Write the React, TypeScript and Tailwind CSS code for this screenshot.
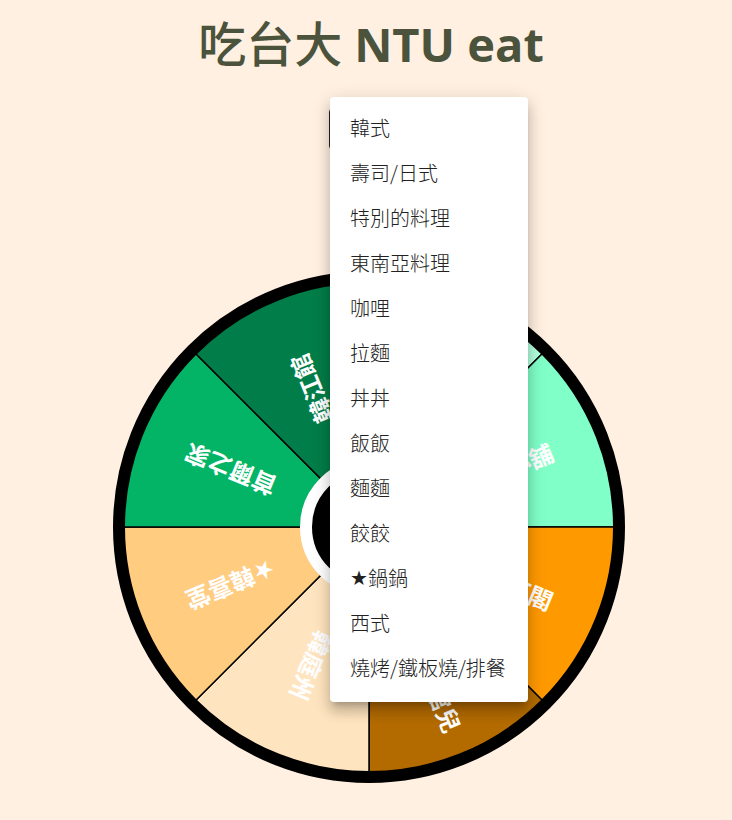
const CX = 256;
const SECTORS = [
  { label: '韓石亭', fill: '#b3ffde' },
  { label: '韓味小舖', fill: '#80ffc8' },
  { label: '韓天正閣', fill: '#ff9900' },
  { label: '★韓式小館兒', fill: '#b36b00' },
  { label: '韓庭州', fill: '#ffe5bf' },
  { label: '★韓喜堂', fill: '#ffcc80' },
  { label: '首爾之家', fill: '#04b466' },
  { label: '韓江館', fill: '#007d48' },
];

const CATEGORIES = [
  '韓式', '壽司/日式', '特別的料理', '東南亞料理', '咖哩', '拉麵', '丼丼',
  '飯飯', '麵麵', '餃餃', '★鍋鍋', '西式', '燒烤/鐵板燒/排餐',
];

function Wheel() {
  const r = 247;
  const point = (deg: number) => {
    const a = (deg * Math.PI) / 180;
    return `${CX + r * Math.cos(a)} ${CX + r * Math.sin(a)}`;
  };
  return (
    <svg viewBox="0 0 512 512" className="block w-[512px] max-w-full" role="img" aria-label="吃台大">
      {SECTORS.map((s, i) => {
        const start = -90 + i * 45;
        return (
          <path
            key={s.label}
            d={`M${CX} ${CX} L${point(start)} A${r} ${r} 0 0 1 ${point(start + 45)} Z`}
            fill={s.fill}
            stroke="#000"
            strokeWidth="1.5"
          />
        );
      })}
      {SECTORS.map((s, i) => (
        <text
          key={s.label}
          transform={`translate(${CX} ${CX}) rotate(${-67.5 + i * 45})`}
          x="150"
          textAnchor="middle"
          dominantBaseline="central"
          fill="#fff"
          className="text-[24px] font-bold"
        >
          {s.label.startsWith('★') && <tspan className="font-['DejaVu_Sans']">★</tspan>}
          {s.label.replace('★', '')}
        </text>
      ))}
      <circle cx={CX} cy={CX} r="250" fill="none" stroke="#000" strokeWidth="12" />
      <circle cx={CX} cy={CX} r="63" fill="#000" stroke="#fff" strokeWidth="12" />
    </svg>
  );
}

export default function App() {
  return (
    <main className="flex min-h-screen flex-col items-center bg-[#fff0e1] pb-9 pl-1.5 font-['Open_Sans','Noto_Sans_CJK_TC',sans-serif]">
      <h1 className="flex items-baseline gap-3 pt-2.5 pl-1 text-5xl leading-[66px] font-bold text-[#4b533c]">
        <span className="font-['Noto_Sans_CJK_TC',sans-serif] leading-[62px] font-medium">吃台大</span>
        <span className="text-[47px]">NTU eat</span>
      </h1>
      <div className="relative mt-[31px]">
        <select
          aria-label="料理"
          className="block h-[42px] w-20 appearance-none rounded border border-[#222] bg-transparent px-2 text-xl"
          defaultValue="韓式"
        >
          {CATEGORIES.map((c) => (
            <option key={c}>{c}</option>
          ))}
        </select>
        <ul className="absolute -top-[11px] left-px min-w-[198px] rounded bg-white pt-2 pb-3 font-['Noto_Sans_CJK_TC',sans-serif] shadow-[0_6px_6px_-4px_rgba(0,0,0,0.2),0_10px_12px_1px_rgba(0,0,0,0.14),0_4px_18px_2px_rgba(0,0,0,0.12)]">
          {CATEGORIES.map((c) => (
            <li key={c}>
              <button
                type="button"
                className="flex h-[45px] w-full items-center px-5 text-xl font-light whitespace-nowrap text-[#212121]"
              >
                {c.startsWith('★') && <span className="font-['DejaVu_Sans']">★</span>}
                {c.replace('★', '')}
              </button>
            </li>
          ))}
        </ul>
      </div>
      <div className="mt-[121px]">
        <Wheel />
      </div>
    </main>
  );
}
